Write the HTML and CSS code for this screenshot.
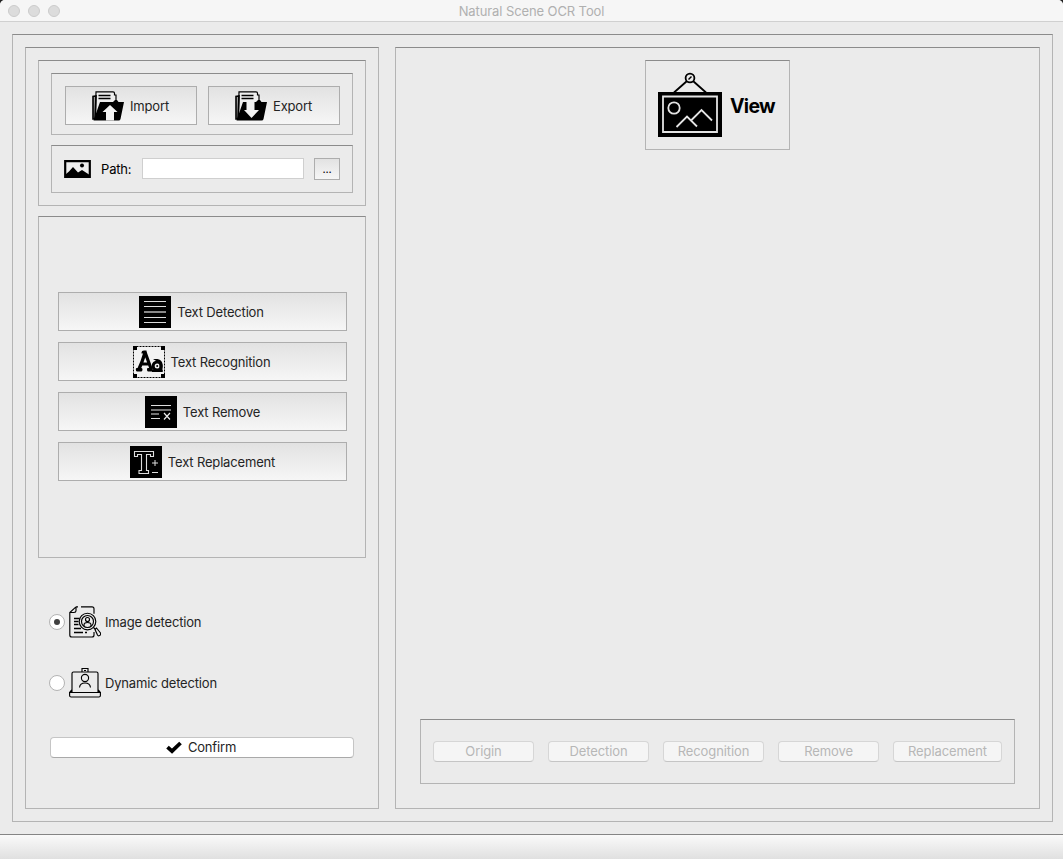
FILE: index.html
```
<!DOCTYPE html>
<html lang="en">
<head>
<meta charset="utf-8">
<title>Natural Scene OCR Tool</title>
<link rel="stylesheet" href="styles.css">
</head>
<body>
<div class="window">
  <header class="titlebar">
    <div class="lights"><i></i><i></i><i></i></div>
    <h1>Natural Scene OCR Tool</h1>
  </header>
  <main class="frame workspace">
    <section class="frame sidebar">
      <div class="frame files">
        <div class="frame transfer">
          <button class="tool">
            <svg width="32" height="32" viewBox="0 0 32 32"><path d="M4 2h18v3h2v4h3v8H3z" fill="#eee"/><path d="M1 6.500v22.500h2L4 6z" fill="#999" stroke="#000" stroke-width="1.600"/><path d="M3.600 24L4 1.800H21q1.500 0 1.500 1.500V5H24v5" fill="none" stroke="#000" stroke-width="1.200"/><path d="M6.500 5.500h12M6.500 8.500h12" stroke="#000" stroke-width="1.400"/><path d="M8 12h13l2-2h2l1.500 2h5.500L28.500 29q-.3 1.500-2 1.500H1.500z"/><path d="M18 15l7.500 7H22v8.500h-8V22h-3.500z" fill="#f2f2f2"/></svg>
            <span>Import</span>
          </button>
          <button class="tool">
            <svg width="32" height="32" viewBox="0 0 32 32"><path d="M4 2h18v3h2v4h3v8H3z" fill="#eee"/><path d="M1 6.500v22.500h2L4 6z" fill="#999" stroke="#000" stroke-width="1.600"/><path d="M3.600 24L4 1.800H21q1.500 0 1.500 1.500V5H24v5" fill="none" stroke="#000" stroke-width="1.200"/><path d="M8 12h13l2-2h2l1.500 2h5.500L28.500 29q-.3 1.500-2 1.500H1.500z"/><path d="M11.500 8h8v12H24l-7.500 8L9 20h2.500z" fill="#f2f2f2"/><path d="M6.500 5.500h12M6.500 8.500h12" stroke="#000" stroke-width="1.400"/></svg>
            <span>Export</span>
          </button>
        </div>
        <div class="frame path-row">
          <svg width="28" height="18" viewBox="0 0 28 18"><path d="M1.200 1.200h24.600v15.600H1.200z" fill="#eee" stroke="#000" stroke-width="2.200"/><circle cx="18" cy="5.500" r="2"/><path d="M2 14l3-2.500 4-4.500 5 5.500 4-2.500 7 4.500v2H2z"/></svg>
          <label for="path">Path:</label>
          <input id="path" type="text">
          <button class="tool browse">...</button>
        </div>
      </div>
      <div class="frame actions">
        <button class="tool snug">
          <svg width="32" height="32" viewBox="0 0 32 32"><path d="M0 0h32v32H0z"/><path d="M5 5.500h22M5 10.500h22M5 21.500h22M5 26.500h22" stroke="#ddd"/><path d="M5 16h22" stroke="#888" stroke-width="2"/></svg>
          <span>Text Detection</span>
        </button>
        <button class="tool snug">
          <svg width="32" height="32" viewBox="0 0 32 32"><path d="M.5 .5h31v31H.5z" fill="#f2f2f2" stroke="#000" stroke-dasharray="2 1"/><path d="M0 0h4v4H0zM28 0h4v4h-4zM0 28h4v4H0zM28 28h4v4h-4z"/><path d="M12 6.500Q9 17 5.500 24M12 6l6.500 18M8 18h8" fill="none" stroke="#000" stroke-width="3.200"/><path d="M8.500 6.500q0-2 2.500-2h2.500v3h-5zM4 22h4.500q1 0 1 1.500t-1 2H4q-1.200 0-1.200-2T4 22zM15 22h4.500v3.500H15q-1 0-1-2T15 22z"/><circle cx="24.200" cy="20" r="4" fill="none" stroke="#000" stroke-width="3"/><circle cx="24.200" cy="20" r="1"/><path d="M20 13h4.500q5 1 5 6v6h-3V17zM19 24h10q1 0 1 1t-1 1H19z"/></svg>
          <span>Text Recognition</span>
        </button>
        <button class="tool">
          <svg width="32" height="32" viewBox="0 0 32 32"><path d="M0 0h32v32H0z"/><path d="M6 9.500h20M6 22.500h9" stroke="#ddd"/><path d="M6 14h20M6 18h8" stroke="#999" stroke-width="1.500"/><path d="M19 17l6 6.500M25 17l-6 6.500" stroke="#eee" stroke-width="1.200"/></svg>
          <span>Text Remove</span>
        </button>
        <button class="tool">
          <svg width="32" height="32" viewBox="0 0 32 32"><path d="M0 0h32v32H0z"/><path d="M4.500 5.500h19v5h-3v-2h-4v16h2v3h-9.500v-3h2.500v-16h-4v2h-3z" fill="none" stroke="#ddd" stroke-width="1.100"/><path d="M22 17h6M25 14v6M22 26.500h6" stroke="#ddd"/></svg>
          <span>Text Replacement</span>
        </button>
      </div>
      <div class="modes">
        <label class="mode">
          <i class="radio checked"></i>
          <svg class="line-icon" width="32" height="32" viewBox="0 0 32 32"><path d="M12 .8h11q2 0 2 2v5M7 .8L.8 6.500V29q0 2 2 2H23q2 0 2-2v-3M7 .8v4q0 1.700-2 1.700H.8M7 .8h2"/><path d="M5 12.500h5.500M5 15.500h4.500M5 18.500h4.500M5 22.500h7M5 26.500h9M16 26.500h2" stroke-width="1.300"/><circle cx="18.500" cy="15.500" r="8.300"/><circle cx="18.500" cy="15.500" r="6"/><circle cx="18.500" cy="13.500" r="2"/><path d="M15 20v-1q0-2.500 3.500-2.500T22 19v1M24.500 21.500l2 2M26 23.500l1.500-1.500 4 5q.8 2-1.500 2.800-1 .2-1.500-.8z"/></svg>
          <span>Image detection</span>
        </label>
        <label class="mode">
          <i class="radio"></i>
          <svg class="line-icon" width="32" height="32" viewBox="0 0 32 32"><path d="M13 5H4.500q-1.500 0-1.500 1.500v19h26v-19Q29 5 27.500 5H19M13 5V1.500h6V5M13 5h6M15 3.500h2M3 22.500L.6 25.500h30.800L29 22.500M.6 25.500v3q0 1.500 1.500 1.500h27.800q1.500 0 1.500-1.500v-3M14 25.500h4"/><circle cx="16" cy="11" r="3.600"/><path d="M10.500 20.500q.5-4.500 5.500-4.500t5.500 4.500"/></svg>
          <span>Dynamic detection</span>
        </label>
      </div>
      <button class="push confirm">
        <svg width="16" height="13" viewBox="0 0 16 13"><path d="M1.500 6.200L6 10.200 14.500 2" fill="none" stroke="#000" stroke-width="3.800"/></svg>
        <span>Confirm</span>
      </button>
    </section>
    <section class="frame viewer">
      <div class="frame view-card">
        <svg width="64" height="65" viewBox="0 0 64 65"><path d="M16 20.500L29 9h6l13 11.500" fill="none" stroke="#000" stroke-width="1.800"/><circle cx="32" cy="6" r="4.400" fill="#ebebeb" stroke="#000" stroke-width="1.800"/><path d="M30.500 7.500l3-3" stroke="#000" stroke-width="1.500"/><path d="M0 20h64v45H0z"/><path d="M5 24.500h54v35.500H5z" fill="none" stroke="#e4e4e4" stroke-width="1.800"/><g fill="none" stroke="#e4e4e4" stroke-width="1.800"><circle cx="16" cy="36" r="5.700"/><path d="M18.500 55L29 44.500l10 10M33 48.500L43.500 38 54 48.500"/></g></svg>
        <strong>View</strong>
      </div>
      <div class="frame stages">
        <button class="push" disabled>Origin</button>
        <button class="push" disabled>Detection</button>
        <button class="push" disabled>Recognition</button>
        <button class="push" disabled>Remove</button>
        <button class="push wide" disabled>Replacement</button>
      </div>
    </section>
  </main>
  <footer class="statusbar"></footer>
</div>
</body>
</html>
```
FILE: styles.css
```
* { box-sizing: border-box; }
body {
  margin: 0;
  background: #222;
  font: 13px/16px Inter, "Liberation Sans", sans-serif;
  letter-spacing: -0.17px;
  color: #242424;
}
svg { display: block; flex: none; }
button { margin: 0; padding: 0; font: inherit; letter-spacing: inherit; color: inherit; }

.window {
  display: flex;
  flex-direction: column;
  height: 859px;
  overflow: hidden;
  background: #ebebeb;
  border-radius: 5px 5px 0 0;
}
.titlebar {
  display: grid;
  grid-template-columns: 1fr auto 1fr;
  align-items: center;
  height: 22px;
  padding: 0 8px;
  background: #f6f6f6;
  border-bottom: 1px solid #d0d0d0;
}
.titlebar h1 { margin: 0; font-size: 13px; font-weight: 400; letter-spacing: -0.1px; color: #b0b0b0; }
.lights { display: flex; gap: 8px; }
.lights i { width: 12px; height: 12px; border: 1px solid #cbcbcb; border-radius: 50%; background: #dcdcdc; }

.frame { border: 1px solid #b4b4b4; border-top-color: #8b8b8b; }
.workspace { display: flex; gap: 16px; height: 788px; margin: 12px 10px 12px 12px; padding: 12px; }
.sidebar { display: flex; flex-direction: column; width: 354px; padding: 12px; }
.files { display: flex; flex-direction: column; gap: 10px; height: 146px; padding: 12px; }
.transfer { display: flex; gap: 11px; height: 62px; padding: 12px 12px 12px 13px; }
.tool {
  display: flex;
  align-items: center;
  justify-content: center;
  gap: 6px;
  height: 39px;
  border: 1px solid #adadad;
  background: linear-gradient(#e2e2e2, #f6f6f6);
}
.tool span { padding-top: 1px; }
.transfer .tool { width: 132px; padding-right: 1px; }
.path-row { display: flex; align-items: center; height: 48px; padding: 0 12px; color: #000; }
.path-row label { width: 41px; margin-left: 9px; }
.path-row input { width: 162px; height: 21px; margin-bottom: 1px; padding: 0; border: 1px solid #cfcfcf; background: #fff; }
.path-row .browse { width: 26px; height: 22px; margin-left: 10px; font-size: 11px; }

.actions {
  display: flex;
  flex-direction: column;
  justify-content: center;
  gap: 11px;
  height: 342px;
  margin-top: 10px;
  padding: 0 18px 1px 19px;
}
.snug { padding-right: 2px; }
.modes { display: flex; flex-direction: column; gap: 29px; margin-top: 48px; padding-left: 11px; }
.mode { display: flex; align-items: center; height: 32px; }
.mode svg { margin: 0 4px; }
.line-icon { fill: none; stroke: #000; stroke-width: 1.15; }
.radio { display: grid; place-items: center; width: 16px; height: 16px; border: 1px solid #b3b3b3; border-radius: 50%; background: #fff; }
.radio.checked::after { content: ""; width: 6px; height: 6px; border-radius: 50%; background: #404040; }

.push {
  display: flex;
  align-items: center;
  justify-content: center;
  width: 101px;
  height: 21px;
  border: 1px solid #c5c5c5;
  border-bottom-color: #a9a9a9;
  border-radius: 4px;
  background: #fff;
}
.push:disabled { padding-bottom: 1px; border-color: #d6d6d6; border-bottom-color: #c5c5c5; background: #f5f5f5; color: #b7b7b7; letter-spacing: -0.1px; }
.confirm { gap: 6px; width: 304px; margin: 38px 0 0 12px; padding: 0 2px 1px 0; }

.viewer { display: flex; flex-direction: column; align-items: center; justify-content: space-between; width: 645px; padding: 12px 0 24px; }
.view-card { display: flex; gap: 8px; width: 145px; height: 90px; padding: 11px 12px; }
.view-card strong { padding-top: 22px; font-size: 19.5px; line-height: 24px; font-weight: 700; letter-spacing: -0.7px; color: #000; }
.stages { display: flex; align-items: center; gap: 14px; width: 595px; height: 65px; padding: 0 12px; }
.stages .wide { width: 109px; }

.statusbar { height: 25px; border-top: 1px solid #858585; background: linear-gradient(#fafafa, #e0e0e0); }
```
